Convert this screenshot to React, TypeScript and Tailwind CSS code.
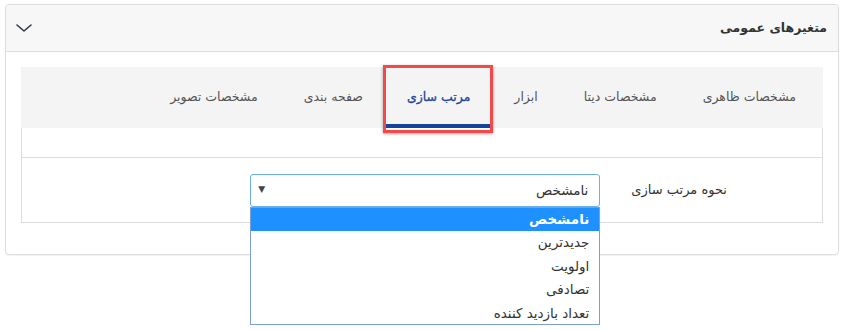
import { useState } from "react";

const tabs = ["مشخصات ظاهری", "مشخصات دیتا", "ابزار", "مرتب سازی", "صفحه بندی", "مشخصات تصویر"];
const options = ["نامشخص", "جدیدترین", "اولویت", "تصادفی", "تعداد بازدید کننده"];

function Chevron() {
  return (
    <svg width="16" height="8" viewBox="0 0 16 8" fill="none">
      <polyline points="1,1 8,7 15,1" stroke="#2b3a4a" strokeWidth="1.6" strokeLinecap="round" strokeLinejoin="round" />
    </svg>
  );
}

export default function App() {
  const [active] = useState(3);
  const [value] = useState(0);

  return (
    <div className="h-[331px] w-[845px] bg-white pt-[4px] pr-[6px] pl-[5px] font-['DejaVu_Sans',sans-serif] text-[#333]" dir="rtl">
      <div className="rounded-[4px] border border-[#dcdcdc] shadow-[0_1px_1px_rgba(0,0,0,0.05)]">
        <div className="flex h-[47px] items-center justify-between rounded-t-[4px] border-b border-[#dcdcdc] bg-[#f7f7f7] pr-[11px] pl-[10px]">
          <span className="text-[12.5px] font-bold text-[#333]">متغیرهای عمومی</span>
          <Chevron />
        </div>

        <div className="px-[15px] pt-[15px] pb-[31px]">
          <div className="flex h-[61px] bg-[#f4f4f4] pr-[4px]">
            {tabs.map((t, i) => (
              <div
                key={t}
                className={
                  i === active
                    ? "relative flex items-center border-b-[4px] border-[#11449c] px-[21px] pt-[4px] text-[12.5px] text-[#1f4599] [-webkit-text-stroke:0.3px_#1f4599]"
                    : "flex items-center px-[23px] text-[12.5px] text-[#555]"
                }
              >
                {t}
                {i === active && (
                  <span className="absolute -top-[2px] -right-[2px] -bottom-[9px] -left-[3px] border-[3px] border-[#f24a4a] shadow-[0_1px_3px_rgba(0,0,0,0.35)]" />
                )}
              </div>
            ))}
          </div>

          <div className="border-x border-b border-[#dcdcdc]">
            <div className="h-[30px] border-b border-[#dcdcdc]" />
            <div className="flex h-[64px] items-center gap-[31px] pr-[95px]">
              <span className="text-[13px] text-[#333]">نحوه مرتب سازی</span>
              <div className="relative w-[350px]">
                <div className="flex h-[33px] items-center justify-between rounded-[3px] border border-[#6cb0ea] bg-white pr-[11px] pl-[7px] text-[13.5px]">
                  <span>{options[value]}</span>
                  <span className="text-[9px] text-[#444]">▼</span>
                </div>
                <div className="absolute top-full right-0 left-0 z-10 border border-[#7d9ed6] bg-white text-[13.5px]">
                  {options.map((o, i) => (
                    <div
                      key={o}
                      className={
                        i === value
                          ? "flex h-[23.4px] items-center bg-[#1e90ff] pr-[10px] font-bold text-white"
                          : "flex h-[23.4px] items-center pr-[10px] text-[#333]"
                      }
                    >
                      {o}
                    </div>
                  ))}
                </div>
              </div>
            </div>
          </div>
        </div>
      </div>
    </div>
  );
}
